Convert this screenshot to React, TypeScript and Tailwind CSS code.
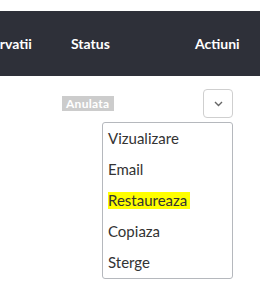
import { useState } from "react"

const actions = ["Vizualizare", "Email", "Restaureaza", "Copiaza", "Sterge"]

export default function App() {
  const [open, setOpen] = useState(true)

  return (
    <div className="w-[260px] h-[301px] overflow-hidden bg-white font-['Lato','Liberation_Sans',sans-serif]">
      {/* table header */}
      <div className="mt-[11px] h-[65px] bg-[#2e3039] flex items-center text-white text-[14px] font-bold">
        <div className="w-[71px] shrink-0 overflow-hidden">
          <span className="block -ml-[33px] whitespace-nowrap">Observatii</span>
        </div>
        <div className="w-[124px] shrink-0">Status</div>
        <div>Actiuni</div>
      </div>

      {/* row */}
      <div className="flex items-start pl-[62px] pt-[13px]">
        <span className="mt-[7px] bg-[#cccccc] text-white text-[12px] font-bold leading-[15px] px-[4px] tracking-[0.3px]">
          Anulata
        </span>
        <div className="relative ml-auto mr-[27px]">
          <button
            onClick={() => setOpen(!open)}
            className="w-[30px] h-[29px] flex items-center justify-center border border-[#cfcfcf] rounded-[4px] bg-white"
          >
            <svg width="9" height="6" viewBox="0 0 9 6" fill="none">
              <path d="M1 1l3.5 3.5L8 1" stroke="#666" strokeWidth="1.4" />
            </svg>
          </button>
          {open && (
            <div className="absolute right-0 top-[33px] w-[131px] border border-[#b5b8bd] rounded-[3px] bg-white">
              {actions.map((a) => (
                <div key={a} className="h-[31px] flex items-center pl-[5px] text-[15px] text-[#333]">
                  <span className={a === "Restaureaza" ? "bg-[#ffff00] leading-[17px] pr-[3px]" : ""}>{a}</span>
                </div>
              ))}
            </div>
          )}
        </div>
      </div>
    </div>
  )
}
